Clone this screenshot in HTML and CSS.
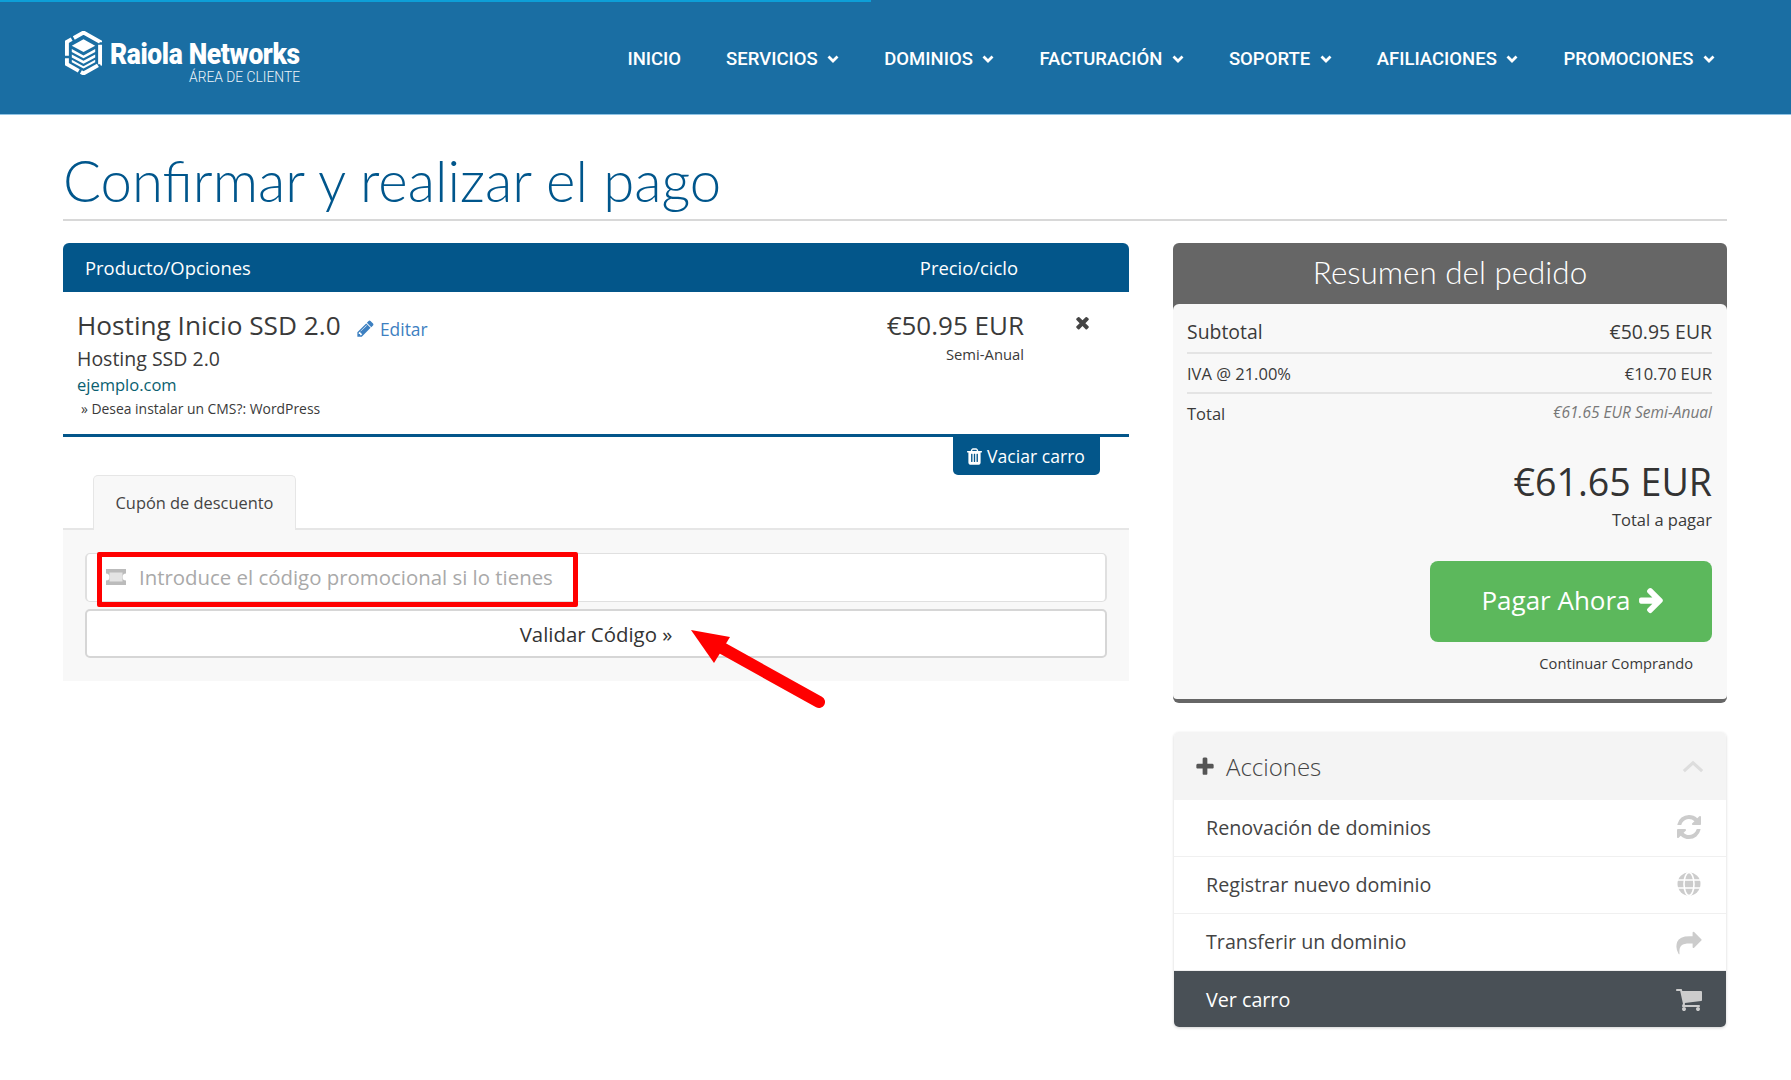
FILE: index.html
```html
<!DOCTYPE html>
<html lang="es">
  <head>
    <meta charset="UTF-8" />
    <meta name="viewport" content="width=device-width, initial-scale=1.0" />
    <title>Confirmar y realizar el pago</title>
    <link rel="stylesheet" href="styles.css">
  </head>
  <body>
    <!-- iconos -->
    <svg class="sprite" xmlns="http://www.w3.org/2000/svg">
      <symbol id="i-pencil" viewBox="0 0 1792 1792"><path d="M491 1536l91-91-235-235-91 91v107h128v128h107zm523-928q0-22-22-22-10 0-17 7l-542 542q-7 7-7 17 0 22 22 22 10 0 17-7l542-542q7-7 7-17zm-54-192l416 416-832 832h-416v-416zm683 96q0 53-37 90l-166 166-416-416 166-165q36-38 90-38 53 0 91 38l235 234q37 39 37 91z"/></symbol>
      <symbol id="i-trash" viewBox="0 0 1792 1792"><path d="M704 1376v-704q0-14-9-23t-23-9h-64q-14 0-23 9t-9 23v704q0 14 9 23t23 9h64q14 0 23-9t9-23zm256 0v-704q0-14-9-23t-23-9h-64q-14 0-23 9t-9 23v704q0 14 9 23t23 9h64q14 0 23-9t9-23zm256 0v-704q0-14-9-23t-23-9h-64q-14 0-23 9t-9 23v704q0 14 9 23t23 9h64q14 0 23-9t9-23zm-544-992h448l-48-117q-7-9-17-11h-317q-10 2-17 11zm928 32v64q0 14-9 23t-23 9h-96v948q0 83-47 143.5t-113 60.5h-832q-66 0-113-58.5t-47-141.5v-952h-96q-14 0-23-9t-9-23v-64q0-14 9-23t23-9h309l70-167q15-37 54-63t79-26h320q40 0 79 26t54 63l70 167h309q14 0 23 9t9 23z"/></symbol>
      <symbol id="i-times" viewBox="0 0 1792 1792"><path d="M1490 1322q0 40-28 68l-136 136q-28 28-68 28t-68-28l-294-294-294 294q-28 28-68 28t-68-28l-136-136q-28-28-28-68t28-68l294-294-294-294q-28-28-28-68t28-68l136-136q28-28 68-28t68 28l294 294 294-294q28-28 68-28t68 28l136 136q28 28 28 68t-28 68l-294 294 294 294q28 28 28 68z"/></symbol>
      <symbol id="i-refresh" viewBox="0 0 1792 1792"><path d="M1639 1056q0 5-1 7-64 268-268 434.5t-478 166.5q-146 0-282.5-55t-243.5-157l-129 129q-19 19-45 19t-45-19-19-45v-448q0-26 19-45t45-19h448q26 0 45 19t19 45-19 45l-137 137q71 66 161 102t187 36q134 0 250-65t186-179q11-17 53-117 8-23 30-23h192q13 0 22.5 9.5t9.5 22.5zm25-800v448q0 26-19 45t-45 19h-448q-26 0-45-19t-19-45 19-45l138-138q-148-137-349-137-134 0-250 65t-186 179q-11 17-53 117-8 23-30 23h-199q-13 0-22.5-9.5t-9.5-22.5v-7q65-268 270-434.5t480-166.5q146 0 284 55.5t245 156.5l130-129q19-19 45-19t45 19 19 45z"/></symbol>
      <symbol id="i-share" viewBox="-100 -100 1992 1992"><path d="M1792 640q0 26-19 45l-512 512q-19 19-45 19t-45-19-19-45v-256h-224q-98 0-175.5 6t-154 21.5-133 42.5-105.5 69.5-80 101-48.5 138.5-17.5 181q0 55 5 123 0 6 2.5 23.5t2.5 26.5q0 15-8.5 25t-23.5 10q-16 0-28-17-7-9-13-22t-13.5-30-10.5-24q-127-285-127-451 0-199 53-333 162-403 875-403h224v-256q0-26 19-45t45-19 45 19l512 512q19 19 19 45z" transform="translate(0 180)"/></symbol>
      <symbol id="i-cart" viewBox="0 0 1792 1792"><path d="M704 1536q0 52-38 90t-90 38-90-38-38-90 38-90 90-38 90 38 38 90zm896 0q0 52-38 90t-90 38-90-38-38-90 38-90 90-38 90 38 38 90zm128-1088v512q0 24-16.5 42.5t-40.5 21.5l-1044 122q13 60 13 70 0 16-24 64h920q26 0 45 19t19 45-19 45-45 19h-1024q-26 0-45-19t-19-45q0-11 8-31.5t16-36 21.5-40 15.5-29.5l-177-823h-204q-26 0-45-19t-19-45 19-45 45-19h256q16 0 28.5 6.5t19.5 15.5 13 24.5 8 26 5.5 29.5 4.5 26h1201q26 0 45 19t19 45z"/></symbol>
      <symbol id="i-arrow" viewBox="0 0 1792 1792"><path d="M1600 960q0 54-37 91l-651 651q-39 37-91 37-51 0-90-37l-75-75q-38-38-38-91t38-91l293-293h-704q-52 0-84.5-37.5t-32.5-90.5v-128q0-53 32.5-90.5t84.5-37.5h704l-293-294q-38-36-38-90t38-90l75-75q38-38 90-38 53 0 91 38l651 651q37 35 37 90z"/></symbol>
      <symbol id="i-plus" viewBox="0 0 1792 1792"><path d="M1600 736v192q0 40-28 68t-68 28h-416v416q0 40-28 68t-68 28h-192q-40 0-68-28t-28-68v-416h-416q-40 0-68-28t-28-68v-192q0-40 28-68t68-28h416v-416q0-40 28-68t68-28h192q40 0 68 28t28 68v416h416q40 0 68 28t28 68z"/></symbol>
      <symbol id="i-globe" viewBox="-2 -2 28 28">
        <circle cx="12" cy="12" r="11.5" fill="currentColor"/>
        <ellipse cx="12" cy="12" rx="5" ry="11.5" fill="none" stroke="#fff" stroke-width="1.6"/>
        <path d="M0 8h24M0 16h24" fill="none" stroke="#fff" stroke-width="1.6"/>
      </symbol>
      <symbol id="i-ticket" viewBox="0 0 24 18">
        <path d="M2 1h20v4.5a3.5 3.5 0 0 0 0 7V17H2v-4.5a3.5 3.5 0 0 0 0-7z" fill="currentColor"/>
        <rect x="5.5" y="4.5" width="13" height="9" fill="#e4e4e4"/>
      </symbol>
      <symbol id="i-chev" viewBox="0 0 12 8"><path d="M1.5 1.500 6 6l4.500-4.500" fill="none" stroke="currentColor" stroke-width="2.8"/></symbol>
    </svg>

    <header class="topbar">
      <div class="progress"></div>
      <a class="logo" href="#">
        <svg class="logo-mark" viewBox="0 0 40 44">
          <path d="M20 1 37 10.500V33.500L20 43 3 33.500V10.500Z" fill="none" stroke="#fff" stroke-width="4" stroke-dasharray="20 2.5"/>
          <path d="M20 8 32 14.500 20 21 8 14.500Z" fill="#fff"/>
          <path d="M8 18 20 24.500 32 18V21L20 27.500 8 21ZM8 23.500 20 30 32 23.500V26.500L20 33 8 26.500ZM8 29 20 35.500 32 29V31.500L20 38 8 31.500Z" fill="#fff"/>
        </svg>
        <span class="logo-text">
          <span class="logo-name">Raiola Networks</span>
          <span class="logo-sub">ÁREA DE CLIENTE</span>
        </span>
      </a>
      <nav class="menu">
        <a href="#">INICIO</a>
        <a href="#">SERVICIOS <svg class="chev"><use href="#i-chev"/></svg></a>
        <a href="#">DOMINIOS <svg class="chev"><use href="#i-chev"/></svg></a>
        <a href="#">FACTURACIÓN <svg class="chev"><use href="#i-chev"/></svg></a>
        <a href="#">SOPORTE <svg class="chev"><use href="#i-chev"/></svg></a>
        <a href="#">AFILIACIONES <svg class="chev"><use href="#i-chev"/></svg></a>
        <a href="#">PROMOCIONES <svg class="chev"><use href="#i-chev"/></svg></a>
      </nav>
    </header>

    <main class="page">
      <h1 class="page-title">Confirmar y realizar el pago</h1>

      <div class="columns">
        <section class="cart">
          <div class="cart-head">
            <span>Producto/Opciones</span>
            <span class="cart-head-price">Precio/ciclo</span>
          </div>
          <div class="cart-item">
            <div class="item-info">
              <div class="item-title">Hosting Inicio SSD 2.0 <a class="edit" href="#"><svg class="icon"><use href="#i-pencil"/></svg> Editar</a></div>
              <div class="item-group">Hosting SSD 2.0</div>
              <a class="item-domain" href="#">ejemplo.com</a>
              <div class="item-option">» Desea instalar un CMS?: WordPress</div>
            </div>
            <div class="item-price">
              <div class="price">€50.95 EUR</div>
              <div class="cycle">Semi-Anual</div>
            </div>
            <svg class="remove"><use href="#i-times"/></svg>
          </div>

          <div class="empty-row">
            <a class="empty-btn" href="#"><svg class="icon"><use href="#i-trash"/></svg> Vaciar carro</a>
          </div>

          <div class="tabs">
            <div class="tab">Cupón de descuento</div>
          </div>
          <div class="tab-panel">
            <div class="promo-input">
              <svg class="ticket"><use href="#i-ticket"/></svg>
              <span>Introduce el código promocional si lo tienes</span>
            </div>
            <button class="promo-btn">Validar Código »</button>
          </div>
        </section>

        <aside class="side">
          <section class="summary">
            <h2 class="summary-title">Resumen del pedido</h2>
            <div class="summary-body">
              <div class="line line-sub"><span>Subtotal</span><span>€50.95 EUR</span></div>
              <div class="line line-tax"><span>IVA @ 21.00%</span><span>€10.70 EUR</span></div>
              <div class="line line-total"><span>Total</span><em>€61.65 EUR Semi-Anual</em></div>
              <div class="grand">€61.65 EUR</div>
              <div class="grand-label">Total a pagar</div>
              <div class="pay-row">
                <a class="pay-btn" href="#">Pagar Ahora <svg class="icon"><use href="#i-arrow"/></svg></a>
              </div>
              <div class="continue-row"><a href="#">Continuar Comprando</a></div>
            </div>
          </section>

          <section class="actions">
            <div class="actions-head">
              <svg class="plus"><use href="#i-plus"/></svg>
              <span>Acciones</span>
              <svg class="collapse" viewBox="0 0 24 14"><path d="M2 12 12 3l10 9" fill="none" stroke="currentColor" stroke-width="3.5"/></svg>
            </div>
            <a class="action" href="#">Renovación de dominios <svg class="action-icon"><use href="#i-refresh"/></svg></a>
            <a class="action" href="#">Registrar nuevo dominio <svg class="action-icon"><use href="#i-globe"/></svg></a>
            <a class="action" href="#">Transferir un dominio <svg class="action-icon"><use href="#i-share"/></svg></a>
            <a class="action action-dark" href="#">Ver carro <svg class="action-icon"><use href="#i-cart"/></svg></a>
          </section>
        </aside>
      </div>
    </main>

    <!-- anotaciones rojas sobre la captura -->
    <div class="mark-box"></div>
    <svg class="mark-arrow" viewBox="0 0 150 90">
      <path d="M11 10 50 17 34 43Z" fill="#f00"/>
      <path d="M42 28 139 82" fill="none" stroke="#f00" stroke-width="12" stroke-linecap="round"/>
    </svg>
  </body>
</html>
```

FILE: styles.css
```css
body {
  margin: 0;
  font-family: "Open Sans", sans-serif;
  color: #3a3a3a;
  background-color: #fff;
  position: relative;
  min-height: 1080px;
}

a {
  color: inherit;
  text-decoration: none;
}

.sprite {
  display: none;
}

.icon {
  width: 1em;
  height: 1em;
  fill: currentColor;
  vertical-align: -0.12em;
}

/* Cabecera */
.topbar {
  position: relative;
  height: 115px;
  box-sizing: border-box;
  padding: 0 76px 0 64px;
  display: flex;
  justify-content: space-between;
  align-items: center;
  background-color: #1a6ea3;
  border-bottom: 1px solid #8fc3e4;
}

.progress {
  position: absolute;
  top: 0;
  left: 0;
  width: 871px;
  height: 2px;
  background-color: #0d9fd8;
}

.logo {
  display: flex;
  align-items: flex-start;
  gap: 7px;
  color: #fff;
  margin-top: 2px;
}

.logo-mark {
  width: 39px;
  height: 44px;
}

.logo-text {
  width: 190px;
  margin-top: 8px;
  display: flex;
  flex-direction: column;
  align-items: flex-end;
}

.logo-name {
  font-family: "Roboto", sans-serif;
  font-weight: 900;
  font-size: 30px;
  line-height: 30px;
  letter-spacing: -0.4px;
  transform: scaleX(0.88);
  transform-origin: right center;
  white-space: nowrap;
}

.logo-sub {
  font-family: "Roboto", sans-serif;
  font-weight: 300;
  font-size: 13.8px;
  line-height: 16px;
  color: #eef5fa;
}

.menu {
  display: flex;
  gap: 45px;
  margin-top: 3px;
}

.menu a {
  font-family: "Roboto", sans-serif;
  font-weight: 500;
  font-size: 18.5px;
  color: #fff;
  white-space: nowrap;
}

.chev {
  width: 12px;
  height: 8px;
  margin-left: 5px;
  vertical-align: 2px;
  color: #fff;
}

/* Contenido */
.page {
  padding: 0 64px 0 63px;
}

.page-title {
  margin: 0;
  height: 106px;
  box-sizing: border-box;
  padding-top: 33px;
  font-family: "Lato", sans-serif;
  font-weight: 300;
  font-size: 56.3px;
  line-height: 64px;
  color: #00568c;
  border-bottom: 2px solid #d8d8d8;
}

.columns {
  display: flex;
  gap: 44px;
  margin-top: 22px;
  align-items: flex-start;
}

.cart {
  width: 1066px;
  flex-shrink: 0;
}

.side {
  flex: 1;
}

.cart-head {
  height: 49px;
  box-sizing: border-box;
  padding: 0 0 0 22px;
  display: flex;
  align-items: center;
  justify-content: space-between;
  background-color: #03568a;
  color: #fff;
  font-size: 18.4px;
  border-radius: 6px 6px 0 0;
}

.cart-head-price {
  margin-right: 111px;
}

.cart-item {
  position: relative;
  height: 145px;
  box-sizing: border-box;
  padding: 15px 0 0 14px;
  display: flex;
  justify-content: space-between;
  border-bottom: 3px solid #03568a;
}

.item-title {
  font-size: 26.2px;
  line-height: 36px;
}

.edit {
  margin-left: 9px;
  font-size: 17.4px;
  color: #3d80c1;
  position: relative;
  top: 1px;
}

.edit .icon {
  width: 19px;
  height: 19px;
}

.item-group {
  font-size: 19.5px;
  line-height: 24px;
  margin-top: 1px;
  margin-bottom: 2px;
}

.item-domain {
  display: block;
  font-size: 16.5px;
  line-height: 24px;
  color: #0a6070;
}

.item-option {
  font-size: 13.9px;
  line-height: 24px;
  padding-left: 4px;
}

.item-price {
  text-align: right;
  margin-right: 105px;
}

.price {
  font-size: 26px;
  line-height: 36px;
}

.cycle {
  font-size: 14.8px;
  line-height: 20px;
  margin-top: 1px;
}

.remove {
  position: absolute;
  top: 21px;
  right: 37px;
  width: 19px;
  height: 19px;
  fill: #444;
}

.empty-row {
  display: flex;
  justify-content: flex-end;
  padding-right: 29px;
}

.empty-btn {
  width: 147px;
  height: 38px;
  box-sizing: border-box;
  padding-right: 3px;
  display: flex;
  align-items: center;
  justify-content: center;
  gap: 3px;
  background-color: #03568a;
  color: #fff;
  font-size: 17.6px;
  border-radius: 0 0 5px 5px;
}

.empty-btn .icon {
  width: 19px;
  height: 19px;
}

.tabs {
  padding-left: 30px;
  border-bottom: 2px solid #e6e6e6;
  height: 55px;
  box-sizing: border-box;
}

.tab {
  width: 203px;
  height: 55px;
  box-sizing: border-box;
  text-align: center;
  font-size: 16.4px;
  line-height: 54px;
  background-color: #f8f8f8;
  border: 1px solid #e6e6e6;
  border-bottom: none;
  border-radius: 5px 5px 0 0;
  color: #444;
}

.tab-panel {
  background-color: #f8f8f8;
  padding: 23px 22px 22px;
  height: 151px;
  box-sizing: border-box;
}

.promo-input,
.promo-btn {
  display: flex;
  align-items: center;
  width: 100%;
  box-sizing: border-box;
  background-color: #fff;
  border: 2px solid #e0e0e0;
  border-radius: 5px;
  font-family: "Open Sans", sans-serif;
  font-size: 20.4px;
}

.promo-input {
  height: 49px;
  padding: 0 0 2px 17px;
  color: #a9a9a9;
  border-top-width: 1px;
  border-bottom-width: 1px;
}

.ticket {
  width: 24px;
  height: 18px;
  margin-right: 11px;
  color: #bbb;
}

.promo-btn {
  height: 49px;
  margin-top: 7px;
  justify-content: center;
  color: #333;
  border-color: #d6d6d6;
}

/* Resumen */
.summary {
  border-radius: 6px;
  background-color: #666;
  padding-bottom: 4px;
}

.summary-title {
  margin: 0;
  height: 61px;
  text-align: center;
  font-family: "Lato", sans-serif;
  font-weight: 300;
  font-size: 31.4px;
  line-height: 58px;
  color: #fff;
}

.summary-body {
  height: 395px;
  box-sizing: border-box;
  padding: 10px 15px 0 14px;
  background-color: #f8f8f8;
  border-radius: 6px 6px 4px 4px;
}

.line {
  display: flex;
  justify-content: space-between;
  align-items: center;
}

.line-sub {
  height: 40px;
  font-size: 19.4px;
  border-bottom: 2px solid #e4e4e4;
  padding-bottom: 3px;
  box-sizing: border-box;
}

.line-tax {
  height: 40px;
  font-size: 16.5px;
  border-bottom: 2px solid #e4e4e4;
  box-sizing: border-box;
}

.line-total {
  height: 38px;
  font-size: 16.5px;
}

.line-total em {
  font-size: 15.5px;
  color: #777;
  margin-top: -2px;
}

.grand {
  margin-top: 25px;
  text-align: right;
  font-size: 37.6px;
  line-height: 50px;
  color: #333;
}

.grand-label {
  text-align: right;
  font-size: 16.5px;
  line-height: 26px;
}

.pay-row {
  display: flex;
  justify-content: flex-end;
  margin-top: 28px;
}

.pay-btn {
  width: 282px;
  height: 81px;
  box-sizing: border-box;
  padding: 0 0 4px 5px;
  display: flex;
  align-items: center;
  justify-content: center;
  gap: 6px;
  background-color: #5cb85c;
  color: #fff;
  font-size: 26px;
  border-radius: 8px;
}

.pay-btn .icon {
  width: 29px;
  height: 29px;
}

.continue-row {
  text-align: right;
  padding-right: 19px;
  font-size: 14.7px;
  line-height: 22px;
  margin-top: 10px;
}

/* Acciones */
.actions {
  margin-top: 29px;
  width: 552px;
  margin-left: 1px;
  border-radius: 5px;
  box-shadow: 0 1px 3px rgba(0, 0, 0, 0.18);
  overflow: hidden;
}

.actions-head {
  height: 68px;
  display: flex;
  align-items: center;
  padding: 0 22px 0 20px;
  background-color: #f4f4f4;
  font-family: "Open Sans", sans-serif;
  font-weight: 300;
  font-size: 24px;
  color: #444;
}

.plus {
  width: 22px;
  height: 22px;
  margin-top: 2px;
  margin-right: 10px;
  fill: #555;
}

.collapse {
  width: 22px;
  height: 13px;
  margin-left: auto;
  color: #ddd;
}

.action {
  height: 57px;
  box-sizing: border-box;
  display: flex;
  align-items: center;
  justify-content: space-between;
  padding: 0 23px 2px 32px;
  font-size: 19.7px;
  color: #444;
  border-bottom: 1px solid #f0f0f0;
}

.action-icon {
  width: 28px;
  height: 28px;
  fill: #ccc;
  color: #ccc;
}

.action-dark {
  height: 56px;
  padding-bottom: 0;
  background-color: #495056;
  color: #fff;
  border-bottom: none;
}

/* Anotaciones */
.mark-box {
  position: absolute;
  top: 552px;
  left: 97px;
  width: 481px;
  height: 55px;
  box-sizing: border-box;
  border: 5px solid #f00;
  border-radius: 2px;
}

.mark-arrow {
  position: absolute;
  top: 620px;
  left: 680px;
  width: 150px;
  height: 90px;
}
```
